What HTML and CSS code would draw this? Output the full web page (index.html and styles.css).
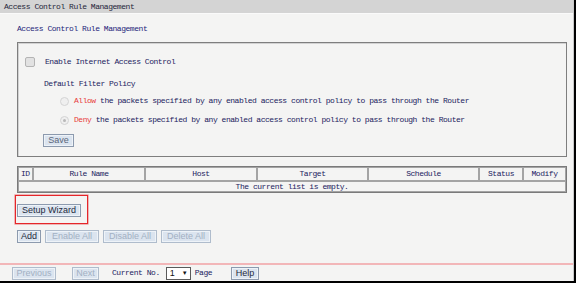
FILE: index.html
```html
<!DOCTYPE html>
<html>
<head>
<meta charset="utf-8">
<link rel="stylesheet" href="styles.css">
</head>
<body>
<div class="page">
  <div class="titlebar">Access Control Rule Management</div>
  <div class="content">
    <div class="subtitle">Access Control Rule Management</div>
    <div class="panel">
      <div class="row row-enable"><span class="checkbox"></span><span class="txt">Enable Internet Access Control</span></div>
      <div class="row row-policy"><span class="txt">Default Filter Policy</span></div>
      <div class="row row-radio row-allow"><span class="radio"></span><span class="txt"><span class="red">Allow</span> the packets specified by any enabled access control policy to pass through the Router</span></div>
      <div class="row row-radio row-deny"><span class="radio checked"></span><span class="txt"><span class="red">Deny</span> the packets specified by any enabled access control policy to pass through the Router</span></div>
      <div class="row row-save"><button class="btn btn-save">Save</button></div>
    </div>
    <table class="rules">
      <tr>
        <th class="c-id">ID</th>
        <th class="c-name">Rule Name</th>
        <th class="c-host">Host</th>
        <th class="c-target">Target</th>
        <th class="c-sched">Schedule</th>
        <th class="c-status">Status</th>
        <th class="c-mod">Modify</th>
      </tr>
      <tr>
        <td colspan="7" class="empty">The current list is empty.</td>
      </tr>
    </table>
    <div class="wizard-mark"><button class="btn btn-wizard">Setup Wizard</button></div>
    <div class="actions">
      <button class="btn btn-add">Add</button>
      <button class="btn disabled btn-enable">Enable All</button>
      <button class="btn disabled btn-disable">Disable All</button>
      <button class="btn disabled btn-delete">Delete All</button>
    </div>
  </div>
  <div class="divider"></div>
  <div class="pager">
    <button class="btn disabled btn-prev">Previous</button>
    <button class="btn disabled btn-next">Next</button>
    <span class="txt pager-label">Current No.</span>
    <span class="select"><span class="sel-val">1</span><span class="sel-arrow">&#9660;</span></span>
    <span class="txt pager-page">Page</span>
    <button class="btn btn-help">Help</button>
  </div>
</div>
</body>
</html>
```
FILE: styles.css
```css
html, body {
  margin: 0;
  padding: 0;
  background: #000;
}
.page {
  width: 573px;
  height: 281px;
  background: #f4f4f3;
  border-right: 1px solid #c8c8c8;
  overflow: hidden;
  font-family: "Liberation Mono", "DejaVu Sans Mono", monospace;
  font-size: 8px;
  letter-spacing: -0.46px;
  color: #22225e;
}
.titlebar {
  height: 13px;
  line-height: 13px;
  background: #d4d4d4;
  border-bottom: 1px solid #fafafa;
  padding-left: 4px;
  color: #26263a;
}
.content {
  padding-left: 17px;
  width: 550px;
}
.subtitle {
  margin-top: 10px;
  height: 10px;
  line-height: 10px;
  color: #24247a;
}
.panel {
  margin-top: 8px;
  border: 1px solid #7e7e7e;
  box-shadow: inset 1px 1px 0 #d2d2d2;
  padding: 13px 0 9px 7px;
  display: flex;
  flex-direction: column;
}
.row {
  display: flex;
  align-items: center;
  height: 10px;
}
.row-enable { height: 11px; }
.row-policy { margin-top: 12px; padding-left: 19px; }
.row-radio { padding-left: 35px; }
.row-allow { margin-top: 7px; }
.row-deny { margin-top: 9px; }
.row-save { margin-top: 9px; height: 13px; padding-left: 18px; }
.txt { white-space: nowrap; line-height: 10px; }
.red { color: #e83a3a; }
.checkbox {
  width: 8px;
  height: 8px;
  border: 1px solid #b4b4b4;
  border-radius: 2px;
  background: #e2e2e2;
  margin-right: 10px;
}
.radio {
  width: 7px;
  height: 7px;
  border: 1px solid #d4d4d4;
  border-radius: 50%;
  background: #efefef;
  margin-right: 5px;
  box-sizing: content-box;
  position: relative;
}
.radio.checked::after {
  content: "";
  position: absolute;
  left: 2px;
  top: 2px;
  width: 3px;
  height: 3px;
  border-radius: 50%;
  background: #b8b8b8;
}
.btn {
  box-sizing: border-box;
  height: 13px;
  padding: 0;
  margin: 0;
  font-family: "Liberation Sans", Arial, sans-serif;
  font-size: 9px;
  line-height: 11px;
  letter-spacing: 0;
  color: #2e3a4e;
  background: #dbe4ef;
  border: 1px solid #8c9aae;
  box-shadow: inset 0 0 0 1px #eef3f8;
  text-align: center;
}
.btn.disabled {
  color: #a2b0c3;
  border-color: #afbccc;
}
.btn-save { width: 31px; color: #5a667a; }
.rules {
  margin-top: 9px;
  width: 550px;
  table-layout: fixed;
  border-collapse: separate;
  border-spacing: 0;
  border: 1px solid #7a7a7a;
}
.rules th, .rules td {
  box-sizing: border-box;
  border: 1px solid #a4a4a4;
  padding: 0;
  font-weight: normal;
  text-align: center;
  white-space: nowrap;
  overflow: hidden;
}
.rules th { height: 14px; line-height: 12px; }
.rules td { height: 11px; line-height: 9px; }
.rules th.c-id { width: 15px; text-align: left; padding-left: 2px; }
.c-name { width: 112px; }
.c-host { width: 112px; }
.c-target { width: 111px; }
.c-sched { width: 111px; }
.c-status { width: 44px; }
.c-mod { width: 43px; }
.wizard-mark {
  margin-top: 2px;
  margin-left: -2px;
  width: 71px;
  height: 27px;
  border: 1px solid #e5262a;
  box-shadow: 0 0 0 0.6px rgba(229, 38, 42, 0.5);
  box-sizing: content-box;
  padding: 0;
  display: flex;
  align-items: flex-start;
}
.btn-wizard {
  margin: 8px 0 0 1px;
  width: 64px;
  color: #1f2a3c;
}
.actions {
  margin-top: 6px;
  display: flex;
  gap: 4px;
}
.btn-add { width: 24px; color: #1f2a3c; }
.btn-enable { width: 54px; }
.btn-disable { width: 54px; }
.btn-delete { width: 50px; }
.divider {
  margin-top: 20px;
  height: 2px;
  background: #f2b6b8;
}
.pager {
  margin-top: 1px;
  display: flex;
  align-items: center;
  padding-left: 12px;
  height: 14px;
}
.btn-prev { width: 44px; }
.btn-next { width: 27px; margin-left: 16px; }
.pager-label { margin-left: 13px; }
.select {
  margin-left: 6px;
  box-sizing: border-box;
  width: 25px;
  height: 13px;
  background: #fff;
  border: 1px solid #5a5a5a;
  display: flex;
  align-items: center;
  justify-content: space-between;
  padding: 0 2px 0 3px;
  font-family: "Liberation Sans", Arial, sans-serif;
  font-size: 9px;
  letter-spacing: 0;
  color: #111;
}
.sel-arrow { font-size: 6px; }
.pager-page { margin-left: 4px; }
.btn-help { width: 28px; margin-left: 19px; color: #1f2a3c; }
```
